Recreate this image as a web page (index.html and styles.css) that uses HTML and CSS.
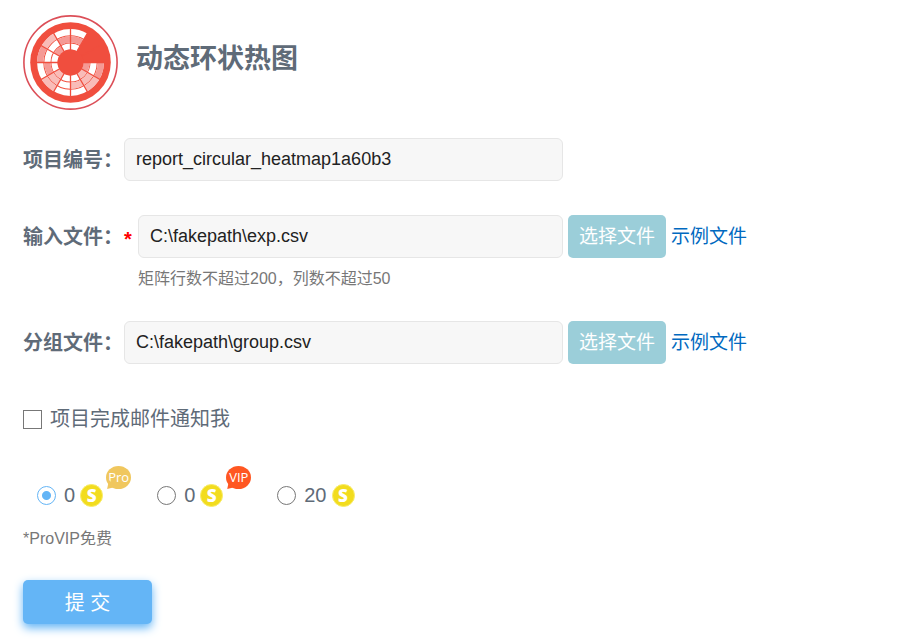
FILE: index.html
```html
<!DOCTYPE html>
<html lang="zh-CN">
<head>
<meta charset="utf-8">
<title>动态环状热图</title>
<meta name="viewport" content="width=device-width, initial-scale=1">
<link rel="stylesheet" href="styles.css">
</head>
<body>

<form class="task_form" action="#" method="post">
	<div class="task_head">
		<svg class="logo" viewBox="-47.5 -47.5 95 95" aria-hidden="true">
			<circle r="46.6" fill="#fff" stroke="#dc4f58" stroke-width="1.6"/>
			<circle r="40.3" fill="#f04e3e"/>
			<!-- 三层圆环 -->
			<g fill="none" stroke="#fff" stroke-width="6.2">
				<circle r="30.3" pathLength="12" stroke-dasharray="10 2"/>
				<circle r="23.1" pathLength="12" stroke-dasharray="10 2"/>
				<circle r="16" pathLength="12" stroke-dasharray="10 2"/>
			</g>
			<g fill="none" stroke="#f59a95" stroke-width="6.2">
				<circle r="30.3" pathLength="12" stroke-dasharray="1 5 1 5"/>
				<circle r="23.1" pathLength="12" stroke-dasharray="0 5 1 2 2 2"/>
				<circle r="16" pathLength="12" stroke-dasharray="1 6 1 4"/>
			</g>
			<g fill="none" stroke="#f9bcb8" stroke-width="6.2">
				<circle r="30.3" pathLength="12" stroke-dasharray="0 1 1 2 1 2 1 4"/>
				<circle r="23.1" pathLength="12" stroke-dasharray="0 1 2 1 1 7"/>
				<circle r="16" pathLength="12" stroke-dasharray="0 1 1 2 1 7"/>
			</g>
			<path d="M0-34V34M-34 0H34M-17-29.5 17 29.5M17-29.5-17 29.5M-29.5-17 29.5 17M-29.5 17 29.5-17" stroke="#f04e3e" stroke-width="1.3"/>
			<circle r="13" fill="#f04e3e"/>
		</svg>
		<h1>动态环状热图</h1>
	</div>

	<div class="row">
		<label class="row_label" for="projectNo">项目编号：</label>
		<div class="field"><input type="text" class="inp" id="projectNo" value="report_circular_heatmap1a60b3"></div>
	</div>

	<div class="row">
		<label class="row_label" for="inputFile">输入文件：</label>
		<div class="field"><span class="required">*</span><input type="text" class="inp" id="inputFile" value="C:\fakepath\exp.csv"></div>
		<button type="button" class="btn_file">选择文件</button>
		<a href="#" class="link">示例文件</a>
		<p class="tip">矩阵行数不超过200，列数不超过50</p>
	</div>

	<div class="row">
		<label class="row_label" for="groupFile">分组文件：</label>
		<div class="field"><input type="text" class="inp" id="groupFile" value="C:\fakepath\group.csv"></div>
		<button type="button" class="btn_file">选择文件</button>
		<a href="#" class="link">示例文件</a>
	</div>

	<label class="notice"><input type="checkbox" class="check"><span>项目完成邮件通知我</span></label>

	<div class="price_list">
		<label class="price">
			<input type="radio" name="price" class="radio" checked>
			<span class="num">0</span>
			<span class="coin">S</span>
			<span class="badge badge_pro">Pro</span>
		</label>
		<label class="price">
			<input type="radio" name="price" class="radio">
			<span class="num">0</span>
			<span class="coin">S</span>
			<span class="badge badge_vip">VIP</span>
		</label>
		<label class="price">
			<input type="radio" name="price" class="radio">
			<span class="num">20</span>
			<span class="coin">S</span>
		</label>
	</div>
	<p class="free">*ProVIP免费</p>

	<button type="submit" class="btn_submit">提 交</button>
</form>

</body>
</html>
```
FILE: styles.css
```css
*{box-sizing:border-box;}
body,h1,p{margin:0;padding:0;}
body{background:#fff;color:#5f6b78;font-family:"Liberation Sans","Noto Sans CJK SC",sans-serif;font-size:20px;}
input,button{margin:0;font-family:inherit;}

.task_form{padding:15px 23px;}
.task_head{display:flex;gap:18px;margin-bottom:28px;}
.logo{width:95px;height:95px;}
.task_head h1{font-size:27px;line-height:89px;}

/* 表单行 */
.row{display:grid;grid-template-columns:101px minmax(0,439px) auto auto;justify-content:start;align-items:center;margin-bottom:34px;}
.row_label{padding-top:2px;font-weight:bold;line-height:41px;white-space:nowrap;}
.field{display:flex;align-items:center;}
.required{width:14px;padding-top:4px;color:#f00;font-weight:bold;line-height:24px;}
.inp{flex:1;min-width:0;height:43px;padding:0 11px;border:1px solid #e6e6e6;border-radius:6px;background:#f7f7f7;color:#222;font-size:18px;}
.btn_file{height:43px;margin-left:5px;padding:0 11px 4px;border:none;border-radius:5px;background:#9bced9;color:#fff;font-size:19px;white-space:nowrap;}
.link{margin-left:5px;padding-bottom:4px;color:#0069c0;font-size:19px;text-decoration:none;white-space:nowrap;}
.tip{grid-column:2 / -1;padding-left:14px;margin-top:13px;color:#777;font-size:16px;line-height:16px;}

.notice{display:flex;align-items:center;gap:8px;margin-top:40px;line-height:30px;}
.check,.radio{flex:none;appearance:none;width:19px;height:19px;margin:0;border:1px solid #777;background:#fff;}
.check:checked{background:#64b5f6;}
.radio{border-radius:50%;}
.radio:checked{border-color:#64b5f6;background:radial-gradient(circle,#64b5f6 4px,#fff 5px);}

/* 价格 */
.price_list{display:flex;flex-wrap:wrap;gap:54px;margin-top:46px;padding-left:14px;}
.price{display:flex;position:relative;align-items:center;line-height:30px;}
.num{margin-left:8px;}
.coin{width:23px;height:23px;margin-left:5px;border:1px solid #f8ec6a;border-radius:50%;background:#f2dc1e;color:#fff;font-family:"Open Sans",sans-serif;font-size:17px;font-weight:800;line-height:21px;text-align:center;}
.badge{position:absolute;left:100%;top:-14px;width:25px;height:23px;margin-left:3px;border-radius:50%;color:#fff;font-family:"Open Sans",sans-serif;font-size:13px;line-height:22px;text-align:center;}
.badge:before{position:absolute;left:1px;bottom:0;width:9px;height:9px;background:inherit;clip-path:polygon(0 100%,20% 0,100% 75%);content:'';}
.badge_pro{background:#f0c75e;}
.badge_vip{background:#ff5722;}
.free{margin-top:17px;color:#777;font-size:16px;line-height:24px;}

.btn_submit{width:129px;height:44px;margin-top:29px;padding-bottom:3px;border:none;border-radius:5px;background:#64b5f6;box-shadow:0 4px 10px #64b5f6;color:#fff;font-size:20px;}
```
